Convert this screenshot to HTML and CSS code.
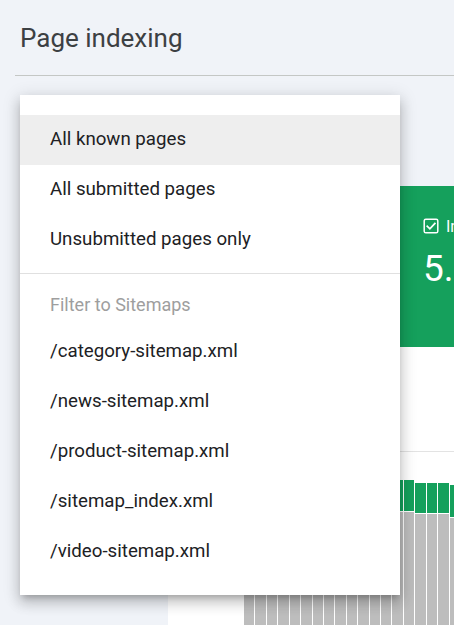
FILE: index.html
```html
<!DOCTYPE html>
<html lang="en">
<head>
<meta charset="utf-8">
<title>Page indexing</title>
<link rel="stylesheet" href="styles.css">
</head>
<body>
<header class="page-header">
  <h1 class="page-title">Page indexing</h1>
</header>

<main class="report-card">
  <div class="tiles">
    <div class="tile-spacer"></div>
    <div class="tile tile-indexed">
      <div class="tile-label">
        <svg class="tile-check" viewBox="0 0 16 16" width="16" height="16" aria-hidden="true">
          <rect x="1.2" y="1.2" width="13.6" height="13.6" rx="1.6" fill="none" stroke="#fff" stroke-width="1.5"/>
          <path d="M4.3 8.3 L6.9 10.8 L11.8 5.6" fill="none" stroke="#fff" stroke-width="1.8" stroke-linecap="square"/>
        </svg>
        <span>Indexed</span>
      </div>
      <div class="tile-value">5.2K</div>
    </div>
  </div>
  <div class="chart-head"></div>
  <div class="chart">
    <div class="bar" style="height:152px"><div class="seg-green" style="height:30px"></div><div class="seg-gray"></div></div>
    <div class="bar" style="height:150px"><div class="seg-green" style="height:29px"></div><div class="seg-gray"></div></div>
    <div class="bar" style="height:151px"><div class="seg-green" style="height:30px"></div><div class="seg-gray"></div></div>
    <div class="bar" style="height:153px"><div class="seg-green" style="height:31px"></div><div class="seg-gray"></div></div>
    <div class="bar" style="height:154px"><div class="seg-green" style="height:30px"></div><div class="seg-gray"></div></div>
    <div class="bar" style="height:154px"><div class="seg-green" style="height:31px"></div><div class="seg-gray"></div></div>
    <div class="bar" style="height:155px"><div class="seg-green" style="height:31px"></div><div class="seg-gray"></div></div>
    <div class="bar" style="height:156px"><div class="seg-green" style="height:31px"></div><div class="seg-gray"></div></div>
    <div class="bar" style="height:156px"><div class="seg-green" style="height:32px"></div><div class="seg-gray"></div></div>
    <div class="bar" style="height:157px"><div class="seg-green" style="height:31px"></div><div class="seg-gray"></div></div>
    <div class="bar" style="height:158px"><div class="seg-green" style="height:31px"></div><div class="seg-gray"></div></div>
    <div class="bar" style="height:158px"><div class="seg-green" style="height:32px"></div><div class="seg-gray"></div></div>
    <div class="bar" style="height:159px"><div class="seg-green" style="height:31px"></div><div class="seg-gray"></div></div>
    <div class="bar" style="height:160px"><div class="seg-green" style="height:31px"></div><div class="seg-gray"></div></div>
    <div class="bar" style="height:160px"><div class="seg-green" style="height:31px"></div><div class="seg-gray"></div></div>
    <div class="bar" style="height:157px"><div class="seg-green" style="height:30px"></div><div class="seg-gray"></div></div>
    <div class="bar" style="height:157px"><div class="seg-green" style="height:30px"></div><div class="seg-gray"></div></div>
    <div class="bar" style="height:157px"><div class="seg-green" style="height:30px"></div><div class="seg-gray"></div></div>
    <div class="bar" style="height:155px"><div class="seg-green" style="height:32px"></div><div class="seg-gray"></div></div>
  </div>
</main>

<div class="menu" role="listbox">
  <div class="menu-item is-selected">All known pages</div>
  <div class="menu-item">All submitted pages</div>
  <div class="menu-item">Unsubmitted pages only</div>
  <div class="menu-divider"></div>
  <div class="menu-header">Filter to Sitemaps</div>
  <div class="menu-item">/category-sitemap.xml</div>
  <div class="menu-item">/news-sitemap.xml</div>
  <div class="menu-item">/product-sitemap.xml</div>
  <div class="menu-item">/sitemap_index.xml</div>
  <div class="menu-item">/video-sitemap.xml</div>
</div>
</body>
</html>
```

FILE: styles.css
```css
html, body {
  margin: 0;
  padding: 0;
}

body {
  width: 454px;
  height: 625px;
  overflow: hidden;
  position: relative;
  background: #f0f3f8;
  font-family: Roboto, "Liberation Sans", Arial, sans-serif;
  color: #202124;
}

.page-header {
  margin-left: 15px;
  padding: 22px 0 21px 5px;
  border-bottom: 1px solid #c4c7c5;
}

.page-title {
  margin: 0;
  font-size: 26px;
  line-height: 32px;
  font-weight: 400;
  color: #3c4043;
}

.report-card {
  margin: 110px 0 0 168px;
  background: #ffffff;
  min-height: 400px;
}

.tiles {
  display: flex;
  height: 161px;
}

.tile-spacer {
  width: 232px;
  flex: none;
}

.tile {
  flex: 1;
  padding: 32px 0 0 23px;
  color: #ffffff;
  white-space: nowrap;
  overflow: hidden;
}

.tile-indexed {
  background: #15a05c;
}

.tile-label {
  display: flex;
  align-items: center;
  gap: 7px;
  height: 16px;
  font-size: 16px;
}

.tile-check {
  width: 16px;
  height: 16px;
  flex: none;
}

.tile-value {
  margin-top: 13px;
  font-size: 37px;
  line-height: 44px;
  font-weight: 400;
}

.chart-head {
  height: 104px;
  border-bottom: 1px solid #e3e3e3;
}

.chart {
  margin-top: 28px;
  padding-left: 76px;
  height: 160px;
  display: flex;
  align-items: flex-end;
  gap: 1px;
}

.bar {
  width: 10.43px;
  flex: none;
  display: flex;
  flex-direction: column;
}

.seg-green {
  background: #15a05c;
  flex: none;
}

.seg-gray {
  flex: 1;
  margin-top: 1px;
  background: #bdbdbd;
}

.menu {
  position: absolute;
  top: 95px;
  left: 20px;
  width: 380px;
  padding: 20px 0 18px;
  background: #ffffff;
  box-shadow: 0 5px 6px -3px rgba(0,0,0,.2), 0 8px 12px 1px rgba(0,0,0,.14), 0 3px 16px 2px rgba(0,0,0,.12);
}

.menu-item {
  height: 50px;
  box-sizing: border-box;
  padding: 0 0 2px 30px;
  display: flex;
  align-items: center;
  font-size: 18.7px;
  color: #202124;
}

.menu-item.is-selected {
  background: #eeeeee;
}

.menu-divider {
  height: 1px;
  margin: 8px 0;
  background: #e0e0e0;
}

.menu-header {
  height: 45px;
  display: flex;
  align-items: center;
  padding-left: 30px;
  font-size: 18px;
  color: #9e9e9e;
}
```
